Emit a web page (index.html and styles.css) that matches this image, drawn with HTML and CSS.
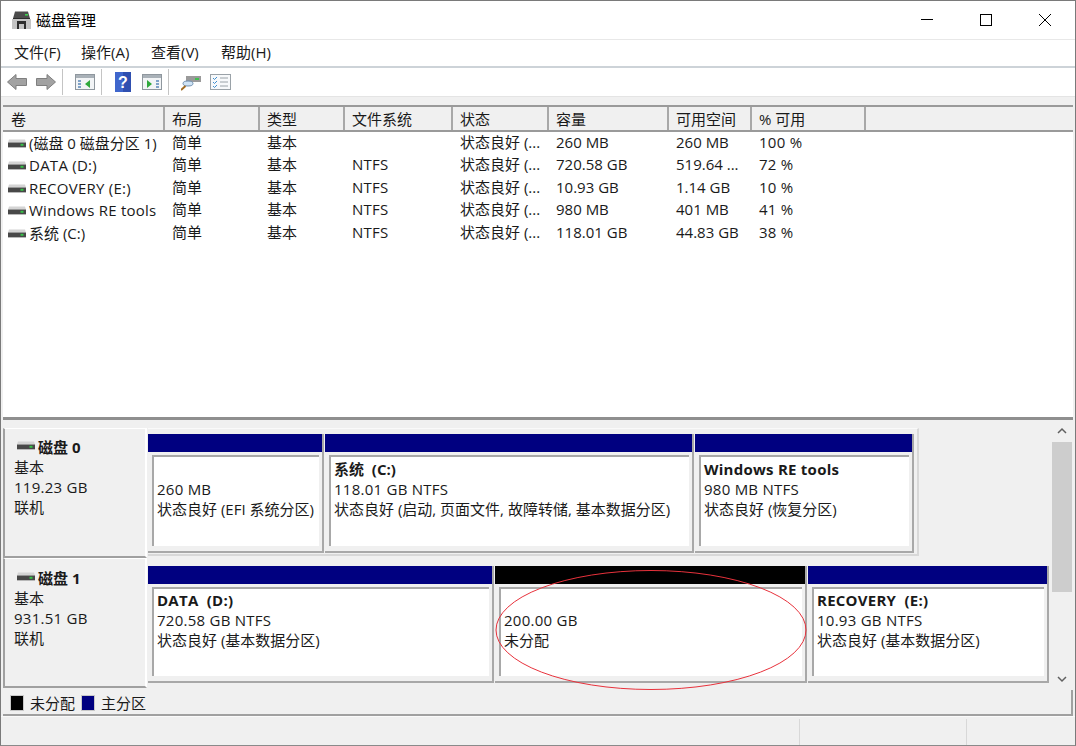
FILE: index.html
```html
<!DOCTYPE html>
<html lang="zh-CN">
<head>
<meta charset="utf-8">
<title>磁盘管理</title>
<link rel="stylesheet" href="styles.css">
</head>
<body>
<svg class="sprite" width="0" height="0">
  <defs>
    <symbol id="drive" viewBox="0 0 18 9">
      <path d="M1 0.500h16l1 3H0z" fill="#d4d4d4"/>
      <rect y="3.500" width="18" height="4.500" fill="#484848"/>
      <rect y="8" width="18" height="1" fill="#b8b8b8"/>
      <rect x="12.500" y="4.800" width="3" height="2" fill="#35c046"/>
    </symbol>
  </defs>
</svg>
<div class="window">
  <header class="titlebar">
    <svg class="app-icon" viewBox="0 0 20 20" width="20" height="20">
      <path d="M4 1.500h13l2 7H2z" fill="#4c4c4c"/>
      <path d="M2 8h17v1H2z" fill="#2b2b2b"/>
      <rect x="14" y="4" width="3" height="1.600" fill="#3fd04f"/>
      <path d="M1 9h19v10H1z" fill="#c4c4c4"/>
      <path d="M6 11h9v8h-2v-5H8v5H6z" fill="#2e2e2e"/>
    </svg>
    <span class="title">磁盘管理</span>
    <div class="caption">
      <svg viewBox="0 0 46 20" width="46" height="20"><path d="M17 9.500h12" stroke="#000" fill="none"/></svg>
      <svg viewBox="0 0 46 20" width="46" height="20"><rect x="17.500" y="4.500" width="11" height="11" stroke="#000" fill="none"/></svg>
      <svg viewBox="0 0 46 20" width="46" height="20"><path d="M17 4l12 12M29 4L17 16" stroke="#000" fill="none"/></svg>
    </div>
  </header>
  <nav class="menubar">
    <span>文件(F)</span><span>操作(A)</span><span>查看(V)</span><span>帮助(H)</span>
  </nav>
  <div class="toolbar">
    <svg class="arrow" viewBox="0 0 20 16" width="20" height="16"><path d="M.5 8L9 .5v4h10.500v7H9v4z" fill="#a2a2a2" stroke="#7f7f7f"/></svg>
    <svg class="arrow" viewBox="0 0 20 16" width="20" height="16"><path d="M19.500 8L11 .5v4H.5v7H11v4z" fill="#a2a2a2" stroke="#7f7f7f"/></svg>
    <i class="sep"></i>
    <svg class="pane" viewBox="0 0 20 16" width="20" height="16"><rect x=".5" y=".5" width="19" height="15" fill="#f2f4f6" stroke="#8f979e"/><rect x="1" y="1" width="18" height="3" fill="#a9b1b8"/><path d="M3 6h3v2H3zM3 9h3v2H3zM3 12h3v2H3z" fill="#7fa2c8"/><path d="M15 6v8l-5-4z" fill="#2fa83c"/></svg>
    <i class="sep"></i>
    <svg class="help" viewBox="0 0 16 20" width="16" height="20"><rect width="16" height="20" fill="#2f4fb0"/><rect width="8" height="20" fill="#3f66cc"/><text x="8" y="16" class="help-q">?</text></svg>
    <svg class="pane" viewBox="0 0 20 16" width="20" height="16"><rect x=".5" y=".5" width="19" height="15" fill="#f2f4f6" stroke="#8f979e"/><rect x="1" y="1" width="18" height="3" fill="#a9b1b8"/><path d="M14 6h3v2h-3zM14 9h3v2h-3zM14 12h3v2h-3z" fill="#7fa2c8"/><path d="M5 6v8l5-4z" fill="#2fa83c"/></svg>
    <i class="sep"></i>
    <svg class="find" viewBox="0 0 20 18" width="20" height="18"><path d="M5 3h15v6H5z" fill="#9a9a9a"/><rect x="14" y="5" width="4" height="2" fill="#3fc04f"/><ellipse cx="7" cy="10.500" rx="5" ry="2.500" fill="#cfe3f5" stroke="#6f8fb0"/><path d="M4.500 13L0 17" stroke="#a06a20" stroke-width="2"/></svg>
    <svg class="list" viewBox="0 0 21 16" width="21" height="16"><rect x=".5" y=".5" width="20" height="15" fill="#f7f9fb" stroke="#9aa2a8"/><path d="M3 4l1.500 1.500L7 3M3 8l1.500 1.500L7 7M3 12l1.500 1.500L7 11" stroke="#3f8fd0" fill="none"/><path d="M10 4h8M10 8h8M10 12h8" stroke="#9aa2a8"/></svg>
  </div>
  <div class="gap"></div>

  <section class="volumes">
    <div class="vol-head">
      <span class="c1">卷</span><span class="c2">布局</span><span class="c3">类型</span><span class="c4">文件系统</span><span class="c5">状态</span><span class="c6">容量</span><span class="c7">可用空间</span><span class="c8">% 可用</span><span class="filler"></span>
    </div>
    <div class="vol-body">
      <div class="vol-row"><span class="c1 name"><svg class="drive"><use href="#drive"/></svg>(磁盘 0 磁盘分区 1)</span><span class="c2">简单</span><span class="c3">基本</span><span class="c4"></span><span class="c5">状态良好 (...</span><span class="c6">260 MB</span><span class="c7">260 MB</span><span class="c8 lat">100 %</span></div>
      <div class="vol-row"><span class="c1 name lat"><svg class="drive"><use href="#drive"/></svg>DATA (D:)</span><span class="c2">简单</span><span class="c3">基本</span><span class="c4 lat">NTFS</span><span class="c5">状态良好 (...</span><span class="c6">720.58 GB</span><span class="c7">519.64 ...</span><span class="c8 lat">72 %</span></div>
      <div class="vol-row"><span class="c1 name lat"><svg class="drive"><use href="#drive"/></svg>RECOVERY (E:)</span><span class="c2">简单</span><span class="c3">基本</span><span class="c4 lat">NTFS</span><span class="c5">状态良好 (...</span><span class="c6">10.93 GB</span><span class="c7">1.14 GB</span><span class="c8 lat">10 %</span></div>
      <div class="vol-row"><span class="c1 name lat"><svg class="drive"><use href="#drive"/></svg>Windows RE tools</span><span class="c2">简单</span><span class="c3">基本</span><span class="c4 lat">NTFS</span><span class="c5">状态良好 (...</span><span class="c6">980 MB</span><span class="c7">401 MB</span><span class="c8 lat">41 %</span></div>
      <div class="vol-row"><span class="c1 name"><svg class="drive"><use href="#drive"/></svg>系统 (C:)</span><span class="c2">简单</span><span class="c3">基本</span><span class="c4 lat">NTFS</span><span class="c5">状态良好 (...</span><span class="c6">118.01 GB</span><span class="c7">44.83 GB</span><span class="c8 lat">38 %</span></div>
    </div>
  </section>

  <section class="graph">
    <div class="disks">
      <div class="disk">
        <div class="disk-label">
          <div class="disk-name"><svg class="drive"><use href="#drive"/></svg>磁盘 0</div>
          <div>基本</div><div class="lat">119.23 GB</div><div>联机</div>
        </div>
        <div class="parts parts-0">
          <div class="part w1"><div class="bar"></div><div class="pbody"><div class="pname"></div><div class="lat">260 MB</div><div>状态良好 (EFI 系统分区)</div></div></div>
          <div class="part w2"><div class="bar"></div><div class="pbody"><div class="pname">系统&nbsp; (C:)</div><div class="lat">118.01 GB NTFS</div><div>状态良好 (启动, 页面文件, 故障转储, 基本数据分区)</div></div></div>
          <div class="part w3"><div class="bar"></div><div class="pbody"><div class="pname lat">Windows RE tools</div><div class="lat">980 MB NTFS</div><div>状态良好 (恢复分区)</div></div></div>
        </div>
      </div>
      <div class="disk disk-1">
        <div class="disk-label">
          <div class="disk-name"><svg class="drive"><use href="#drive"/></svg>磁盘 1</div>
          <div>基本</div><div class="lat">931.51 GB</div><div>联机</div>
        </div>
        <div class="parts parts-1">
          <div class="part w4"><div class="bar"></div><div class="pbody"><div class="pname lat">DATA&nbsp; (D:)</div><div class="lat">720.58 GB NTFS</div><div>状态良好 (基本数据分区)</div></div></div>
          <div class="part w5"><div class="bar black"></div><div class="pbody"><div class="pname"></div><div class="lat">200.00 GB</div><div>未分配</div></div></div>
          <div class="part w6"><div class="bar"></div><div class="pbody"><div class="pname lat">RECOVERY&nbsp; (E:)</div><div class="lat">10.93 GB NTFS</div><div>状态良好 (基本数据分区)</div></div></div>
        </div>
      </div>
      <svg class="ring" viewBox="0 0 314 122" width="314" height="122"><ellipse cx="157" cy="61" rx="155" ry="59.500" fill="none" stroke="#e8323c"/></svg>
    </div>
    <div class="scrollbar">
      <svg viewBox="0 0 20 22" width="20" height="22"><path d="M6 13l4-4 4 4" fill="none" stroke="#606060" stroke-width="1.500"/></svg>
      <div class="track"><div class="thumb"></div></div>
      <svg viewBox="0 0 20 22" width="20" height="22"><path d="M6 9l4 4 4-4" fill="none" stroke="#606060" stroke-width="1.500"/></svg>
    </div>
  </section>

  <div class="legend">
    <i class="swatch black"></i><span>未分配</span>
    <i class="swatch blue"></i><span>主分区</span>
  </div>
  <footer class="status"><i></i><i></i></footer>
</div>
</body>
</html>
```

FILE: styles.css
```css
* { box-sizing: border-box; }
html, body { margin: 0; padding: 0; }
body { width: 1076px; height: 746px; overflow: hidden; background: #fff; color: #1a1a1a; font: 15px/20px "Open Sans", "Noto Sans CJK SC", sans-serif; }
.sprite { position: absolute; }
.lat { letter-spacing: .25px; }
.window { width: 1076px; height: 746px; display: flex; flex-direction: column; border: 1px solid #7a7a7a; border-bottom-color: #8a8a8a; background: #f0f0f0; }
.titlebar { height: 39px; flex: none; display: flex; align-items: center; padding-left: 10px; background: #fff; border-bottom: 1px solid #e8e8e8; }
.app-icon { margin-right: 5px; }
.title { color: #000; font-size: 15px; flex: 1; }
.caption { display: flex; gap: 13px; margin-right: 7px; }
.menubar { height: 28px; flex: none; display: grid; grid-template-columns: 67px 70px 70px auto; align-items: center; padding: 0 0 2px 13px; background: #fff; border-bottom: 2px solid #cdd3d8; }
.toolbar { height: 29px; flex: none; display: flex; align-items: center; padding: 0 0 1px 6px; background: #fff; border-bottom: 1px solid #e4e4e4; }
.arrow { margin-right: 9px; }
.arrow + .sep { margin-left: -3px; }
.sep { width: 1px; height: 26px; background: #c4c4c4; margin: 0 12px 0 6px; }
.pane + .sep, .find + .sep { margin-left: 6px; }
.help { margin: 0 11px 0 1px; }
.find { margin-right: 9px; }
.help-q { fill: #fff; font: bold 16px "Liberation Sans", sans-serif; text-anchor: middle; }
.gap { height: 8px; flex: none; }
.volumes { height: 315px; flex: none; margin: 0 2px; border-bottom: 3px solid #8f8f8f; display: flex; flex-direction: column; background: #fff; }
.vol-head { height: 27px; flex: none; display: flex; background: #f0f0f0; border-top: 2px solid #9a9a9a; border-bottom: 2px solid #9a9a9a; line-height: 24px; }
.vol-head span { border-right: 2px solid #a8a8a8; padding-left: 7px; }
.vol-head .c1 { padding-left: 8px; }
.vol-head .filler { flex: 1; border-right: 0; }
.vol-body { margin-top: -.25px; }
.vol-row { display: flex; height: 22.5px; line-height: 21px; white-space: nowrap; }
.vol-row span { padding-left: 7px; overflow: hidden; }
.vol-row .name { padding-left: 5px; display: flex; align-items: center; }
.c1 { width: 162px; }
.c2 { width: 95px; }
.c3 { width: 85px; }
.c4 { width: 108px; }
.c5 { width: 96px; }
.c6 { width: 120px; }
.c7 { width: 83px; }
.c8 { width: 114px; }
.drive { width: 18px; height: 9px; flex: none; margin-right: 3px; }
.graph { height: 270px; flex: none; margin: 0 2px; display: flex; }
.disks { position: relative; flex: 1; display: flex; flex-direction: column; padding-top: 8px; }
.disk { display: flex; height: 130px; flex: none; }
.disk-label { width: 144px; flex: none; padding: 8px 0 0 9px; background: #f0f0f0; border-top: 1px solid #fff; border-right: 2px solid #fff; border-bottom: 2px solid #a0a0a0; border-left: 2px solid #a0a0a0; }
.disk-1 .disk-label { padding-top: 9px; }
.disk-name { font-weight: 700; display: flex; align-items: center; }
.disk-name .drive { margin: -4px 3px 0 3px; }
.parts { display: flex; gap: 1px; height: 128px; margin-left: 1px; padding: 5px 3px 1px 0; border-right: 2px solid #d8d8d8; border-bottom: 2px solid #d8d8d8; border-top: 1px solid #fafafa; }
.parts-1 { padding: 8px 0 3px 0; border: 0; }
.part { display: flex; flex-direction: column; border-right: 2px solid #a8a8a8; border-bottom: 2px solid #a8a8a8; flex: none; }
.w1 { width: 176px; }
.w2 { width: 369px; }
.w3 { width: 219px; }
.w4 { width: 346px; }
.w5 { width: 312px; }
.w6 { width: 241px; }
.bar { height: 18px; flex: none; background: #000080; }
.bar.black { background: #000; }
.pbody { flex: 1; margin: 3px 3px 5px 4px; padding: 2px 0 0 3px; background: #fff; border-top: 2px solid #a8a8a8; border-left: 2px solid #a8a8a8; white-space: nowrap; overflow: hidden; }
.parts-1 .pbody { padding-top: 1px; }
.pname { font-weight: 700; height: 20px; }
.ring { position: absolute; left: 491px; top: 149px; overflow: visible; pointer-events: none; }
.scrollbar { width: 20px; flex: none; margin-right: 1px; display: flex; flex-direction: column; background: #f0f0f0; }
.scrollbar svg { flex: none; }
.track { flex: 1; }
.thumb { height: 150px; background: #cdcdcd; }
.legend { height: 26px; flex: none; margin: 0 2px; display: flex; align-items: center; padding: 2px 0 0 7px; background: #f0f0f0; border-bottom: 2px solid #a0a0a0; border-right: 2px solid #a0a0a0; }
.swatch { width: 14px; height: 16px; margin-right: 6px; border: 1px solid #c8c8c8; }
.swatch.black { background: #000; }
.swatch.blue { background: #000080; margin-left: 6px; }
.status { flex: 1; display: flex; justify-content: flex-end; gap: 166px; padding-right: 108px; background: #f0f0f0; border-top: 1px solid #fafafa; }
.status i { width: 1px; background: #d8d8d8; margin-top: 2px; }
```
